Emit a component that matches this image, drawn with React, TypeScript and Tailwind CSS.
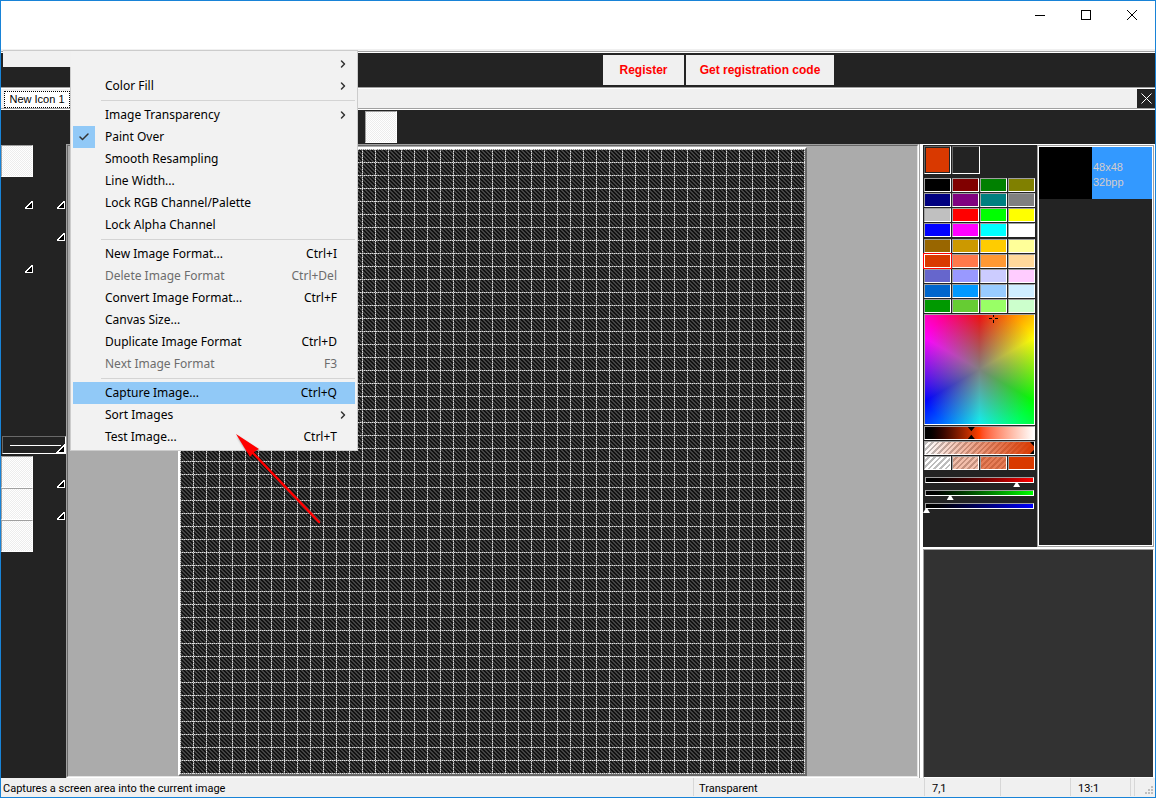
import React, { useState } from 'react';
import { Check, ChevronRight } from 'lucide-react';
import clsx from 'clsx';

type MenuEntry = {
  label: string;
  shortcut?: string;
  submenu?: boolean;
  checked?: boolean;
  disabled?: boolean;
  active?: boolean;
};

// Groups are divided by a separator line
const MENU_GROUPS: MenuEntry[][] = [
  [
    { label: '', submenu: true },
    { label: 'Color Fill', submenu: true },
  ],
  [
    { label: 'Image Transparency', submenu: true },
    { label: 'Paint Over', checked: true },
    { label: 'Smooth Resampling' },
    { label: 'Line Width...' },
    { label: 'Lock RGB Channel/Palette' },
    { label: 'Lock Alpha Channel' },
  ],
  [
    { label: 'New Image Format...', shortcut: 'Ctrl+I' },
    { label: 'Delete Image Format', shortcut: 'Ctrl+Del', disabled: true },
    { label: 'Convert Image Format...', shortcut: 'Ctrl+F' },
    { label: 'Canvas Size...' },
    { label: 'Duplicate Image Format', shortcut: 'Ctrl+D' },
    { label: 'Next Image Format', shortcut: 'F3', disabled: true },
  ],
  [
    { label: 'Capture Image...', shortcut: 'Ctrl+Q', active: true },
    { label: 'Sort Images', submenu: true },
    { label: 'Test Image...', shortcut: 'Ctrl+T' },
  ],
];

const BASIC_COLORS = [
  '#000000', '#800000', '#008000', '#808000',
  '#000080', '#800080', '#008080', '#808080',
  '#c0c0c0', '#ff0000', '#00ff00', '#ffff00',
  '#0000ff', '#ff00ff', '#00ffff', '#ffffff',
];

const EXTRA_COLORS = [
  '#996600', '#cc9900', '#ffcc00', '#ffff99',
  '#d93900', '#ff794b', '#ff9933', '#ffd99b',
  '#6666cc', '#9999ff', '#ccccff', '#ffccff',
  '#0066cc', '#0099ff', '#99ccff', '#d0eeff',
  '#009900', '#66cc33', '#99ff66', '#ccffcc',
];

const CHANNELS = [
  { name: 'Red', value: 217, bar: 'bg-linear-to-r from-black to-[#ff0000]' },
  { name: 'Green', value: 57, bar: 'bg-linear-to-r from-black to-[#00ff00]' },
  { name: 'Blue', value: 0, bar: 'bg-linear-to-r from-black to-[#0000ff]' },
];

const ALPHA_STEPS = [0, 0.33, 0.66, 1];

// Left toolbar: one row per entry, [left, right] cells
const TOOL_ROWS = [
  ['selected', 'empty'],
  ['more', 'more'],
  ['empty', 'more'],
  ['more', 'empty'],
];
const SHAPE_ROWS = [
  ['selected', 'more'],
  ['selected', 'more'],
  ['selected', 'empty'],
];

const CELLS = 48;
const CELL_SIZE = 13;

const sunken = 'border border-t-[#a0a0a0] border-l-[#a0a0a0] border-r-white border-b-white';
const checker = 'bg-[repeating-conic-gradient(#ffffff_0_25%,#ededed_0_50%)] bg-[length:2px_2px]';
const stripes = 'bg-[repeating-linear-gradient(135deg,#ffffff_0_2px,#bdbdbd_2px_4px)]';

const TitleBar = () => (
  <header className="flex h-12 shrink-0 justify-end bg-white">
    <button aria-label="Minimize" className="flex h-7 w-[46px] items-center justify-center">
      <svg width="10" height="10" shapeRendering="crispEdges">
        <path d="M0 5.5H10" stroke="#000" />
      </svg>
    </button>
    <button aria-label="Maximize" className="flex h-7 w-[46px] items-center justify-center">
      <svg width="10" height="10" shapeRendering="crispEdges">
        <rect x="0.5" y="0.5" width="9" height="9" fill="none" stroke="#000" />
      </svg>
    </button>
    <button aria-label="Close" className="flex h-7 w-[46px] items-center justify-center">
      <svg width="10" height="10">
        <path d="M0 0L10 10M10 0L0 10" stroke="#000" />
      </svg>
    </button>
  </header>
);

const ToolCell = ({ kind }: { kind: string }) => {
  if (kind === 'empty') return <span className="size-8" />;
  if (kind === 'selected') return <button aria-label="Tool" className={clsx('size-8', sunken, checker)} />;
  return (
    <button aria-label="More tools" className="flex size-8 items-end justify-end">
      <svg width="8" height="8" shapeRendering="crispEdges">
        <path d="M7 0.5V7H0.5Z" fill="#000" stroke="#fff" />
      </svg>
    </button>
  );
};

const ToolRows = ({ rows }: { rows: string[][] }) => (
  <div className="grid grid-cols-[32px_32px]">
    {rows.flat().map((kind, i) => (
      <ToolCell key={i} kind={kind} />
    ))}
  </div>
);

const Toolbox = () => (
  <aside className="w-[65px] shrink-0 bg-[#232323] pt-px">
    <ToolRows rows={TOOL_ROWS} />
    <div className="h-[163px]" />
    <button
      aria-label="Line width"
      className="mb-[2px] ml-px flex h-[18px] w-16 items-end border border-t-[#696969] border-l-[#696969] border-r-white border-b-white"
    >
      <svg width="62" height="16" shapeRendering="crispEdges">
        <path d="M7 8.5H58" stroke="#fff" />
        <path d="M61 8.5V15H54.5Z" fill="#000" stroke="#fff" />
      </svg>
    </button>
    <ToolRows rows={SHAPE_ROWS} />
  </aside>
);

const PixelCanvas = () => {
  const size = CELLS * CELL_SIZE + 1;
  let grid = '';
  for (let i = 0; i <= CELLS; i++) {
    const p = i * CELL_SIZE + 0.5;
    grid += `M${p} 0V${size}M0 ${p}H${size}`;
  }

  return (
    <div className="shrink-0 border-2 border-t-white border-l-white border-r-[#696969] border-b-[#696969]">
      <svg width={size} height={size} className="block" shapeRendering="crispEdges">
        <defs>
          <pattern id="weave" width="4" height="4" patternUnits="userSpaceOnUse">
            <rect width="4" height="4" fill="#121212" />
            <path d="M0 0.5H2M1 1.5H3M2 2.5H4M3 3.5H4M0 3.5H1" stroke="#434343" />
          </pattern>
        </defs>
        <rect width={size} height={size} fill="url(#weave)" />
        <path d={grid} stroke="#848484" />
        <path d={grid} stroke="#dedede" strokeDasharray="1 1" />
      </svg>
    </div>
  );
};

const Swatches = ({ colors, current, onPick }: { colors: string[]; current: string; onPick: (c: string) => void }) => (
  <div className="grid grid-cols-4 gap-px">
    {colors.map(color => (
      <button
        key={color}
        aria-label={color}
        onClick={() => onPick(color)}
        className={clsx('h-[14px]', color === current ? 'border border-white outline outline-[#ff0000]' : sunken)}
        style={{ backgroundColor: color }}
      />
    ))}
  </div>
);

const Palette = () => {
  const [color, setColor] = useState('#d93900');

  return (
    <section className="w-[114px] shrink-0 bg-[#232323] pt-px">
      <div className="mr-[2px] ml-px">
        <div className="mb-1 flex gap-px">
          <div className="h-7 w-[27px] border border-t-[#696969] border-l-[#696969] border-r-white border-b-white p-px">
            <div className="size-full" style={{ backgroundColor: color }} />
          </div>
          <div className="size-7 border border-t-[#696969] border-l-[#696969] border-r-white border-b-white" />
        </div>
        <Swatches colors={BASIC_COLORS} current={color} onPick={setColor} />
        <div className="h-[2px]" />
        <Swatches colors={EXTRA_COLORS} current={color} onPick={setColor} />

        <div
          className={clsx(
            'mt-px h-[111px] bg-[radial-gradient(circle_closest-side,#808080,#80808000_115%),conic-gradient(#ff0000,#ffff00,#00ff00,#00ffff,#0000ff,#ff00ff,#ff0000)]',
            sunken
          )}
        >
          <svg width="109" height="109" shapeRendering="crispEdges">
            <path d="M64 3.5H67M70 3.5H73M68.5 0V2M68.5 5V8" stroke="#000" />
          </svg>
        </div>
        <input
          type="range"
          aria-label="Brightness"
          defaultValue={42}
          className={clsx(
            'mt-px block h-[14px] w-full appearance-none bg-linear-to-r from-black via-[#ff4000] to-white [&::-webkit-slider-thumb]:h-3 [&::-webkit-slider-thumb]:w-[7px] [&::-webkit-slider-thumb]:appearance-none [&::-webkit-slider-thumb]:bg-black [&::-webkit-slider-thumb]:[clip-path:polygon(0_0,100%_0,50%_35%,50%_65%,100%_100%,0_100%,50%_65%,50%_35%)]',
            sunken
          )}
        />
        <div className={clsx('mt-px', stripes)}>
          <input
            type="range"
            aria-label="Opacity"
            defaultValue={100}
            className={clsx(
              'block h-[14px] w-full appearance-none bg-linear-to-r from-[#d9390000] to-[#d93900] [&::-webkit-slider-thumb]:h-3 [&::-webkit-slider-thumb]:w-1 [&::-webkit-slider-thumb]:appearance-none [&::-webkit-slider-thumb]:bg-black [&::-webkit-slider-thumb]:[clip-path:polygon(0_0,100%_0,100%_35%,100%_65%,100%_100%,0_100%,100%_65%,100%_35%)]',
              sunken
            )}
          />
        </div>
        <div className="mt-px grid grid-cols-4 gap-px">
          {ALPHA_STEPS.map(alpha => (
            <button key={alpha} aria-label={`Opacity ${alpha}`} className={clsx('h-[14px]', sunken, stripes)}>
              <span className="block size-full" style={{ backgroundColor: `rgba(217, 57, 0, ${alpha})` }} />
            </button>
          ))}
        </div>
      </div>

      <div className="mt-[7px] flex flex-col gap-[3px]">
        {CHANNELS.map(channel => (
          <div key={channel.name}>
            <div className={clsx('mr-[3px] ml-[2px] h-[6px]', sunken, channel.bar)} />
            <input
              type="range"
              min={0}
              max={255}
              defaultValue={channel.value}
              aria-label={channel.name}
              className="block h-1 w-[113px] appearance-none bg-transparent [&::-webkit-slider-thumb]:h-1 [&::-webkit-slider-thumb]:w-[7px] [&::-webkit-slider-thumb]:appearance-none [&::-webkit-slider-thumb]:bg-white [&::-webkit-slider-thumb]:[clip-path:polygon(35%_0,65%_0,100%_100%,0_100%)]"
            />
          </div>
        ))}
      </div>
    </section>
  );
};

const FormatList = () => (
  <section className="min-w-0 flex-1 border border-[#a0a0a0]">
    <div className="h-full border border-white bg-[#232323]">
      <button className="flex h-[52px] w-full items-center bg-[#3399ff] text-left text-[11px] leading-[15px] text-[#d4cccc]">
        <span className="mr-px h-full w-[53px] bg-black" />
        <span className="pt-1">
          48x48
          <br />
          32bpp
        </span>
      </button>
    </div>
  </section>
);

const StatusBar = () => (
  <footer className="flex h-[19px] shrink-0 items-stretch bg-[#f0f0f0] pb-px font-['Roboto',sans-serif] text-[11px] leading-[21px] text-black">
    <div className="flex-1 pl-[2px]">Captures a screen area into the current image</div>
    <div className="w-[231px] border-l border-[#d7d7d7] pl-[5px]">Transparent</div>
    <div className="w-[76px] border-l border-[#d7d7d7] pl-[7px]">7,1</div>
    <div className="w-[70px] border-l border-[#d7d7d7]" />
    <div className="w-[60px] border-l border-[#d7d7d7] pl-[7px]">13:1</div>
    <div className="w-1 border-l border-[#d7d7d7]" />
    <div className="flex w-[21px] items-end justify-end border-l border-[#d7d7d7]">
      <svg width="10" height="10" fill="#bfbfbf" shapeRendering="crispEdges">
        <path d="M6 0h2v2h-2zM3 3h2v2h-2zM6 3h2v2h-2zM0 6h2v2h-2zM3 6h2v2h-2zM6 6h2v2h-2z" />
      </svg>
    </div>
  </footer>
);

const ImageMenu = () => (
  <>
    <div className="absolute top-[49px] left-[2px] h-[17px] w-[68px] border-t border-[#cccccc] bg-[#f1f1f1]" />
    <div
      role="menu"
      className="absolute top-[49px] left-[69px] w-[288px] border border-[#cccccc] bg-[#f2f2f2] p-[2px] font-['Noto_Sans',sans-serif] text-[12px]"
    >
      {MENU_GROUPS.map((group, g) => (
        <div key={g}>
          {g > 0 && <div className="my-[3px] ml-[28px] h-px bg-[#d4d4d4]" />}
          {group.map((item, i) => (
            <button
              key={i}
              role="menuitem"
              aria-label={item.label || 'More'}
              disabled={item.disabled}
              className={clsx(
                'flex h-[22px] w-full items-center text-left',
                item.disabled ? 'text-[#6d6d6d]' : 'text-black',
                item.active && 'bg-[#91c9f7]'
              )}
            >
              <span className={clsx('mr-[10px] flex size-[22px] items-center justify-center', item.checked && 'bg-[#91c9f7]')}>
                {item.checked && <Check size={12} color="#333" strokeWidth={3} />}
              </span>
              <span className="flex-1 whitespace-nowrap">{item.label}</span>
              {item.shortcut && <span className="mr-[18px]">{item.shortcut}</span>}
              {item.submenu && <ChevronRight size={12} color="#333" strokeWidth={3} className="mr-[6px]" />}
            </button>
          ))}
        </div>
      ))}
      {/* hides the menu's left edge where the strip runs into it */}
      <div className="absolute top-0 -left-px h-4 w-px bg-[#f1f1f1]" />
    </div>
  </>
);

const PointerArrow = () => (
  <svg
    width="90"
    height="95"
    viewBox="0 0 90 95"
    className="pointer-events-none absolute top-[431px] left-[233px] drop-shadow-[1px_2px_1px_rgba(0,0,0,0.4)]"
  >
    <path d="M18 20L85 90" stroke="#ff0000" strokeWidth="2.5" strokeLinecap="round" />
    <path d="M2 2L25 17L20 20L16 25Z" fill="#ff0000" />
  </svg>
);

const App = () => {
  return (
    <div className="relative flex min-h-screen w-full flex-col border border-[#1883d7] bg-[#f0f0f0] font-['Liberation_Sans',Arial,sans-serif]">
      <TitleBar />

      <div className="mt-[2px] border-t border-[#a0a0a0]" />
      <div className="flex h-9 shrink-0 items-start gap-[2px] border-t border-b border-t-white border-b-[#a0a0a0] bg-[#232323] pt-[2px] pl-[602px] text-[12px] font-bold text-[#ff0000]">
        <button className="h-[30px] w-[81px] bg-[#f0f0f0]">Register</button>
        <button className="h-[30px] w-[148px] bg-[#f0f0f0]">Get registration code</button>
      </div>

      <nav className="flex h-[21px] shrink-0 items-stretch justify-between border-t border-white border-b border-b-[#a0a0a0]">
        <button className="mt-[2px] ml-[3px] w-[66px] border border-dotted border-black bg-white text-[11px] leading-none whitespace-nowrap text-black">
          New Icon 1
        </button>
        <button aria-label="Close image" className="flex w-[18px] items-center justify-center bg-[#232323]">
          <svg width="11" height="11">
            <path d="M0.5 0.5L10.5 10.5M10.5 0.5L0.5 10.5" stroke="#fff" />
          </svg>
        </button>
      </nav>

      <div className="h-[35px] shrink-0 border-t border-white bg-[#232323] pt-px pl-[364px]">
        <button aria-label="Brush" className={clsx('block size-8', sunken, checker)} />
      </div>

      <main className="flex min-h-0 flex-1">
        <Toolbox />
        <div className="flex min-w-0 flex-1 border border-t-[#a0a0a0] border-l-[#a0a0a0] border-r-white border-b-white">
          <div className="flex min-w-0 flex-1 items-center justify-center overflow-hidden border border-t-[#696969] border-l-[#696969] border-r-[#e3e3e3] border-b-[#e3e3e3] bg-[#ababab] pt-px">
            <PixelCanvas />
          </div>
        </div>
        <div className="flex w-[236px] shrink-0 flex-col border-l border-[#a0a0a0]">
          <div className="flex h-[403px] border-t border-l-[3px] border-r border-white bg-[#a0a0a0]">
            <Palette />
            <FormatList />
          </div>
          <div className="flex flex-1 flex-col border-t-2 border-r border-l-[3px] border-white">
            <div className="flex-1 border border-t-[#a0a0a0] border-l-[#a0a0a0] border-r-white border-b-white bg-[#323232]" />
          </div>
        </div>
      </main>

      <StatusBar />
      <ImageMenu />
      <PointerArrow />
    </div>
  );
};

export default App;
